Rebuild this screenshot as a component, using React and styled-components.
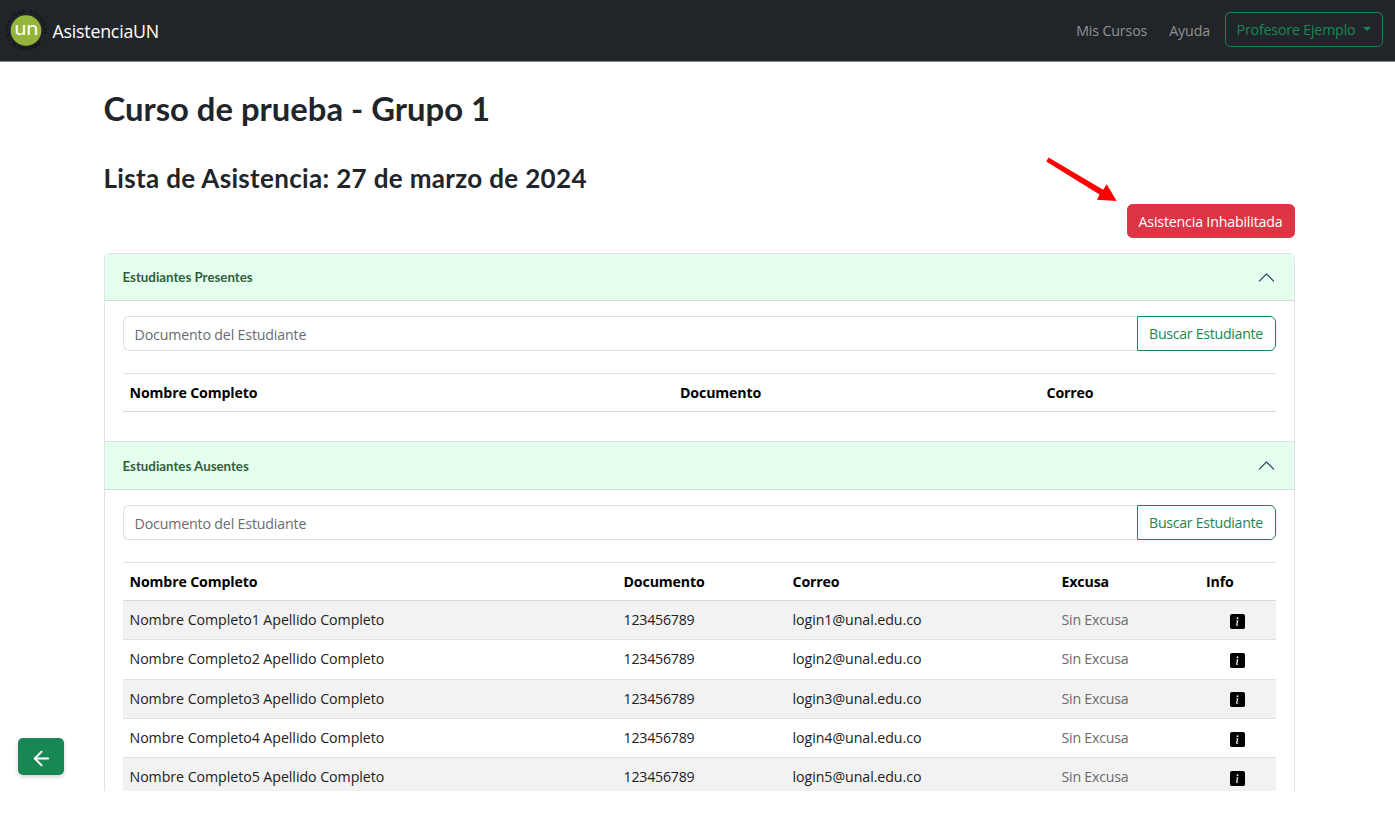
import React from 'react';
import styled, { createGlobalStyle } from 'styled-components';
import { BsChevronUp, BsInfoSquareFill } from 'react-icons/bs';
import { ArrowLeft } from 'lucide-react';

const GlobalStyle = createGlobalStyle`
  *, *::before, *::after { box-sizing: border-box; }
  body {
    margin: 0;
    background: #fff;
    color: #212529;
    font-family: "Open Sans", "Noto Sans", sans-serif;
    font-size: 14.2px;
    line-height: 23px;
  }
`;

const Page = styled.div`
  position: relative;
  height: 791px;
  overflow: hidden;
`;

const Navbar = styled.nav`
  display: flex;
  align-items: center;
  height: 61px;
  padding: 0 12px 0 5px;
  background: #212529;
  box-shadow: 0 1px 0 #86888a;
`;

const Brand = styled.a`
  display: flex;
  align-items: center;
  gap: 4.5px;
  margin-right: auto;
  color: #fff;
  font-size: 17.8px;
  letter-spacing: -0.22px;
  span { padding-top: 2px; }
`;

const NavLink = styled.a`
  margin: 0 22px 0 0;
  color: #909294;
  letter-spacing: -0.12px;
  &:last-of-type { margin-right: 15px; }
`;

const Button = styled.button`
  display: flex;
  align-items: center;
  justify-content: center;
  height: ${p => p.$height || 35}px;
  width: ${p => p.$width}px;
  padding: 0;
  border: 1px solid ${p => (p.$solid ? p.$color : '#198754')};
  border-radius: ${p => (p.$attached ? '0 6px 6px 0' : '5.5px')};
  background: ${p => (p.$solid ? p.$color : 'transparent')};
  color: ${p => (p.$solid ? '#fff' : '#198754')};
  font: inherit;
  letter-spacing: ${p => p.$spacing || -0.17}px;
`;

const UserButton = styled(Button)`
  margin-bottom: 2px;
`;

const Caret = styled.span`
  margin: -2px 0 0 8px;
  border: 4.9px solid transparent;
  border-top-color: currentColor;
  border-bottom: 0;
`;

const Container = styled.main`
  width: 1191px;
  margin-left: 103.5px;
`;

const Title = styled.h1`
  margin: 0;
  padding-top: 27px;
  font: 700 32.8px/42px Lato, "Open Sans", sans-serif;
`;

const Subtitle = styled.h2`
  margin: 0;
  padding-top: 31px;
  font: 700 26px/34px Lato, "Open Sans", sans-serif;
  letter-spacing: 0.33px;
`;

const Actions = styled.div`
  display: flex;
  justify-content: flex-end;
  margin: 9px 0 15px;
`;

const Accordion = styled.div`
  border: 1px solid #dee2e6;
  border-radius: 6px 6px 0 0;
  overflow: hidden;
`;

const PanelHeader = styled.div`
  display: flex;
  align-items: center;
  justify-content: space-between;
  height: ${p => p.$height}px;
  padding: 0 17.5px 0 18px;
  border-bottom: 1px solid #cbe0d3;
  background: #e5ffee;
  color: #31603b;
  font: 700 13.3px/20px Lato, "Open Sans", sans-serif;
  svg { color: #25406c; }
`;

const PanelBody = styled.div`
  padding: 15px 18px 0;
  height: ${p => p.$height};
  border-bottom: 1px solid #dee2e6;
`;

const Search = styled.form`
  display: flex;
  margin-bottom: 22px;
`;

const Input = styled.input`
  flex: 1;
  min-width: 0;
  height: 35px;
  padding: 1px 11px 0;
  border: 1px solid #dee2e6;
  border-right: 0;
  border-radius: 6px 0 0 6px;
  background: #fff;
  font: inherit;
  letter-spacing: -0.16px;
  &::placeholder { color: #686c70; opacity: 1; }
`;

const Row = styled.div`
  display: grid;
  grid-template-columns: ${p => p.$columns};
  align-items: center;
  height: 39.3px;
  border-bottom: 1px solid #dee2e6;
  background: ${p => (p.$striped ? '#f2f2f2' : '#fff')};
  color: #212121;
`;

const HeadRow = styled(Row)`
  height: 39px;
  border-top: 1px solid #dee2e6;
  border-bottom-color: #d3d8dd;
  color: #000;
  font-weight: 700;
  letter-spacing: -0.15px;
`;

const Cell = styled.div`
  display: flex;
  justify-content: ${p => (p.$center ? 'center' : 'flex-start')};
  padding: ${p => (p.$center ? '2.5px 0 0' : '0 7px 1px')};
  letter-spacing: ${p => p.$spacing}px;
  color: ${p => p.$color || 'inherit'};
  white-space: nowrap;
`;

const BackButton = styled.button`
  position: absolute;
  left: 18px;
  top: 738px;
  display: flex;
  align-items: center;
  justify-content: center;
  width: 46px;
  height: 37px;
  padding: 3px 0 0;
  border: 0;
  border-radius: 5px;
  background: #198754;
  color: #fff;
  box-shadow: 0 2px 4px rgba(0, 0, 0, 0.18);
`;

const Pointer = styled.svg`
  position: absolute;
  left: 1040px;
  top: 150px;
`;

function Logo() {
  return (
    <svg width="43" height="46" viewBox="0 0 43 46">
      <defs>
        <path id="seal-top" d="M6.6 32.2A17.4 17.4 0 1 1 35.4 32.2" />
        <path id="seal-bottom" d="M2.6 31A20.8 20.8 0 0 0 39.4 31" />
      </defs>
      <circle cx="21" cy="22.5" r="15.3" fill="#94b43b" />
      <text x="9.2" y="27" fill="#fff" fontFamily="Inter, sans-serif" fontWeight="400" fontSize="18" textLength="24" lengthAdjust="spacingAndGlyphs">un</text>
      <g fill="#0f1113" fontFamily="Open Sans, sans-serif" fontWeight="700" fontSize="4.6">
        <text><textPath href="#seal-top" textLength="68">UNIVERSIDAD NACIONAL</textPath></text>
        <text><textPath href="#seal-bottom" startOffset="5" textLength="35">DE COLOMBIA</textPath></text>
      </g>
    </svg>
  );
}

function SearchBar() {
  return (
    <Search>
      <Input placeholder="Documento del Estudiante" />
      <Button type="button" $width={139} $attached $spacing={-0.3}>Buscar Estudiante</Button>
    </Search>
  );
}

const presentColumns = '550.5px 366.5px 1fr';
const absentColumns = '494px 169px 269px 144.5px 1fr';

export default function App() {
  return (
    <Page>
      <GlobalStyle />
      <Navbar>
        <Brand><Logo /><span>AsistenciaUN</span></Brand>
        <NavLink>Mis Cursos</NavLink>
        <NavLink>Ayuda</NavLink>
        <UserButton $width={158}>Profesore Ejemplo<Caret /></UserButton>
      </Navbar>
      <Container>
        <Title>Curso de prueba - Grupo 1</Title>
        <Subtitle>Lista de Asistencia: 27 de marzo de 2024</Subtitle>
        <Actions>
          <Button $width={168} $height={34} $solid $color="#dc3545">Asistencia Inhabilitada</Button>
        </Actions>
        <Accordion>
          <PanelHeader $height={47}>Estudiantes Presentes<BsChevronUp size={19} /></PanelHeader>
          <PanelBody $height="141px">
            <SearchBar />
            <HeadRow $columns={presentColumns}>
              <Cell>Nombre Completo</Cell>
              <Cell>Documento</Cell>
              <Cell>Correo</Cell>
            </HeadRow>
          </PanelBody>
          <PanelHeader $height={48}>Estudiantes Ausentes<BsChevronUp size={19} /></PanelHeader>
          <PanelBody $height="auto">
            <SearchBar />
            <HeadRow $columns={absentColumns}>
              <Cell>Nombre Completo</Cell>
              <Cell>Documento</Cell>
              <Cell>Correo</Cell>
              <Cell>Excusa</Cell>
              <Cell>Info</Cell>
            </HeadRow>
            {[1, 2, 3, 4, 5].map(n => (
              <Row key={n} $columns={absentColumns} $striped={n % 2 === 1}>
                <Cell $spacing={-0.05}>Nombre Completo{n} Apellido Completo</Cell>
                <Cell $spacing={-0.23}>123456789</Cell>
                <Cell $spacing={-0.06}>login{n}@unal.edu.co</Cell>
                <Cell $spacing={-0.23} $color="#6a6b6d">Sin Excusa</Cell>
                <Cell $center><BsInfoSquareFill size={15} color="#000" /></Cell>
              </Row>
            ))}
          </PanelBody>
        </Accordion>
      </Container>
      <Pointer width="84" height="56" viewBox="0 0 84 56" fill="#f00">
        <path d="M8.6 7.6L6.2 11.6L59.5 44.6L57 49.7L76.7 51L66.7 34.3L63.2 39.8Z" />
      </Pointer>
      <BackButton><ArrowLeft size={23} strokeWidth={2} /></BackButton>
    </Page>
  );
}
